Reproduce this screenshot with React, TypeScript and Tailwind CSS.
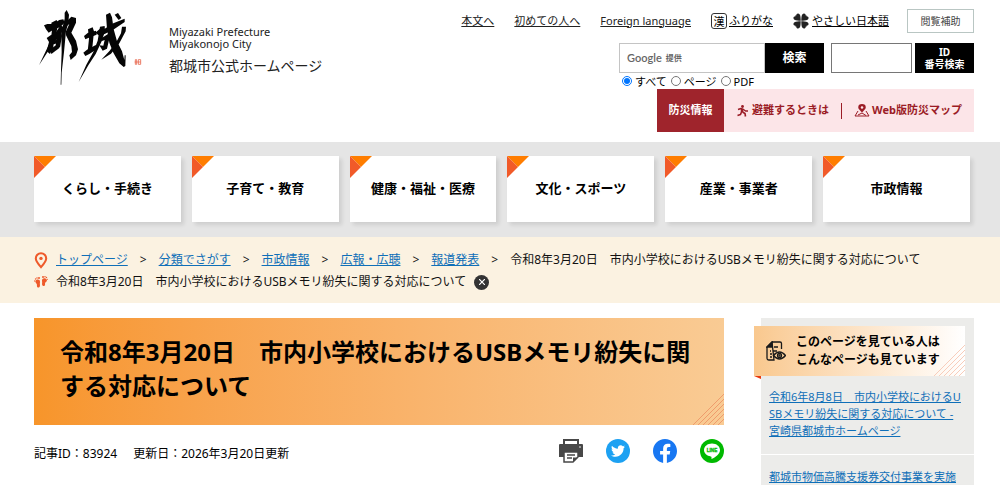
import React from "react";
import { FaTwitter } from "react-icons/fa";

const categories = [
  "くらし・手続き",
  "子育て・教育",
  "健康・福祉・医療",
  "文化・スポーツ",
  "産業・事業者",
  "市政情報",
];

const crumbs = ["トップページ", "分類でさがす", "市政情報", "広報・広聴", "報道発表"];

const pageTitle = "令和8年3月20日　市内小学校におけるUSBメモリ紛失に関する対応について";

function BrushLogo() {
  return (
    <svg viewBox="0 0 330 252" className="h-[84px] w-[110px] shrink-0" role="img" aria-label="都城">
      <g fill="#050505">
        <path d="M30 70 L40 66 L56 66 L76 54 L88 52 L92 62 L78 76 L60 82 L44 92 L36 82Z" />
        <path d="M52 62 L68 54 L72 66 L64 112 L50 118 L54 84Z" />
        <path d="M92 32 L98 24 L105 38 L103 62 L96 88 L90 150 L83 212 L82 248 L80 248 L81 205 L83 150 L82 90 L92 50Z" />
        <path d="M80 70 L92 78 L70 110 L46 142 L15 190 L33 152 L56 104Z" />
        <path d="M38 108 L52 98 L60 104 L58 134 L48 156 L38 148 L45 120Z" />
        <path d="M52 104 L82 90 L84 102 L78 136 L64 138 L68 108 L54 114Z" />
        <path d="M56 117 L76 112 L74 122 L55 128Z" />
        <path d="M48 142 L72 126 L76 138 L52 156Z" />
        <path d="M92 64 L112 44 L126 48 L126 62 L112 92 L126 116 L132 142 L126 160 L110 174 L106 160 L114 150 L112 132 L96 100 L96 88 L106 66 L94 76Z" />
        <path d="M150 102 L162 92 L186 86 L188 98 L168 106 L154 112Z" />
        <path d="M162 82 L176 76 L180 88 L174 146 L161 148 L165 110Z" />
        <path d="M148 152 L158 144 L184 130 L194 130 L188 142 L166 156 L154 162Z" />
        <path d="M184 92 L198 80 L210 82 L238 64 L272 50 L272 60 L240 82 L212 96 L194 100Z" />
        <path d="M198 74 L212 72 L213 88 L202 120 L185 156 L163 190 L134 240 L157 188 L178 150 L191 116Z" />
        <path d="M216 38 L228 32 L234 46 L239 82 L249 118 L264 148 L271 174 L272 160 L275 160 L274 192 L269 195 L256 184 L238 152 L226 122 L219 82Z" />
        <path d="M242 38 L252 33 L262 48 L254 54Z" />
        <path d="M264 74 L276 74 L275 88 L256 124 L231 155 L202 173 L227 146 L247 120 L261 94Z" />
        <path d="M200 110 L222 96 L227 106 L219 140 L206 146 L196 130 L208 131 L212 114 L202 118Z" />
      </g>
      <g fill="none" stroke="#e8694f" strokeWidth="2.5">
        <path d="M304 173h4v14h-4zM313 173h7v14h-7zM302 180h18" />
      </g>
    </svg>
  );
}

function CloverIcon() {
  return (
    <svg viewBox="0 0 32 32" className="size-4 shrink-0" fill="#222" aria-hidden="true">
      {[0, 90, 180, 270].map((turn) => (
        <path
          key={turn}
          transform={`rotate(${turn} 16 16)`}
          d="M15.500 15.500 C11 15 6 15.500 3 13.500 C-0.500 11 0.500 6.500 5 6.500 C4.500 4 5.500 4.500 6.500 5 C6.500 0.500 11 -0.500 13.500 3 C15.500 6 15 11 15.500 15.500Z"
        />
      ))}
    </svg>
  );
}

function EscapeIcon() {
  return (
    <svg viewBox="0 0 24 24" className="size-3 shrink-0" fill="none" stroke="#9b1c26" strokeLinejoin="round" aria-hidden="true">
      <circle cx="11" cy="3" r="2.800" fill="#9b1c26" stroke="none" />
      <path d="M2 9L8 7L13 9L17 12H22" strokeWidth="2.800" />
      <path d="M10 8L10 14" strokeWidth="5" />
      <path d="M11 14L16 17L17 23M9 14L7 19L1 21" strokeWidth="3.200" />
    </svg>
  );
}

function MapIcon() {
  return (
    <svg viewBox="0 0 32 26" className="h-[13px] w-4 shrink-0" fill="none" stroke="#9b1c26" aria-hidden="true">
      <path d="M16 17 C10 11 8.500 9 8.500 6.500 A7.500 6.500 0 0 1 23.500 6.500 C23.500 9 22 11 16 17Z" fill="#9b1c26" stroke="none" />
      <circle cx="16" cy="7" r="2.500" fill="#fce5e8" stroke="none" />
      <path d="M8 14 L2 24 H30 L24 14 M8 22 L16 18 L24 23" strokeWidth="2" />
    </svg>
  );
}

function PinIcon() {
  return (
    <svg viewBox="0 0 14 18" className="h-[17px] w-[14px] shrink-0" aria-hidden="true">
      <path d="M7 16 C3.500 12 1.500 9.500 1.500 6.800 A5.500 5.500 0 0 1 12.500 6.800 C12.500 9.500 10.500 12 7 16Z" fill="none" stroke="#ee5a2b" strokeWidth="2.200" />
      <circle cx="7" cy="6.800" r="1.800" fill="#ee5a2b" />
    </svg>
  );
}

function FootprintsIcon() {
  return (
    <svg viewBox="0 0 28 24" className="h-3 w-[14px] shrink-0" fill="#ee5a2b" aria-hidden="true">
      <path d="M3 10 C6 5 13 7 12 13 C11 16 13 20 11 22 C8 25 5 22 6 18 C6 15 2 14 3 10Z" />
      <circle cx="1.500" cy="10" r="1.300" />
      <circle cx="3" cy="6" r="1.400" />
      <circle cx="6" cy="4" r="1.500" />
      <circle cx="10" cy="4" r="2" />
      <path d="M26 8 C23 2 15 4 16 10 C17 13 15 17 17 19 C20 22 23 19 22 15 C22 12 26 12 26 8Z" />
      <circle cx="26.800" cy="6.500" r="1.200" />
      <circle cx="25" cy="3" r="1.400" />
      <circle cx="22" cy="1.600" r="1.500" />
      <circle cx="18" cy="2" r="2" />
    </svg>
  );
}

function CornerFold() {
  return (
    <svg viewBox="0 0 22 22" className="absolute top-0 left-0 size-[22px]" aria-hidden="true">
      <path d="M0 0H22L11 11Z" fill="#ff7d00" />
      <path d="M0 0V22L11 11Z" fill="#f15a29" />
    </svg>
  );
}

function Stripes({ className }: { className: string }) {
  return (
    <svg viewBox="0 0 31 31" className={className} fill="none" stroke="currentColor" aria-hidden="true">
      <path d="M0 31L31 0M5 31L31 5M10 31L31 10M15 31L31 15M20 31L31 20M25 31L31 25" />
    </svg>
  );
}

function PrintIcon() {
  return (
    <svg viewBox="0 0 24 24" className="size-6" aria-hidden="true">
      <path d="M4 0H20V6H18V2H6V6H4Z" fill="#484848" />
      <path d="M1 5H23Q24 5 24 6V18H19V13H5V18H0V6Q0 5 1 5Z" fill="#484848" />
      <path d="M5 13H19V18L14 23H5Z" fill="#fff" stroke="#484848" strokeWidth="1.500" />
      <path d="M8 16H16M8 19H13" stroke="#484848" strokeWidth="1.300" />
      <path d="M14 23V18.500H19Z" fill="#484848" />
      <circle cx="21" cy="8" r="0.800" fill="#fff" />
    </svg>
  );
}

function FacebookIcon() {
  return (
    <svg viewBox="0 0 24 24" className="size-6" aria-hidden="true">
      <circle cx="12" cy="12" r="11.500" fill="#fff" />
      <path
        fill="#1877f2"
        d="M24 12.073c0-6.627-5.373-12-12-12s-12 5.373-12 12c0 5.990 4.388 10.954 10.125 11.854v-8.385H7.078v-3.470h3.047V9.430c0-3.007 1.792-4.669 4.533-4.669 1.312 0 2.686.235 2.686.235v2.953H15.830c-1.491 0-1.956.925-1.956 1.874v2.250h3.328l-.532 3.470h-2.796v8.385C19.612 23.027 24 18.062 24 12.073z"
      />
    </svg>
  );
}

function LineIcon() {
  return (
    <svg viewBox="0 0 24 24" className="size-6" aria-hidden="true">
      <circle cx="12" cy="12" r="12" fill="#00b900" />
      <path d="M12 4.500C7.500 4.500 4 7.400 4 11c0 3.200 2.900 5.900 6.800 6.400.9.200.8.600.6 2.100 0 .3.200.5.600.3C15 18.300 20 15.200 20 11c0-3.600-3.500-6.500-8-6.500z" fill="#fff" />
      <text x="12" y="12.700" textAnchor="middle" fontSize="4.600" fontWeight="700" fill="#00b900" stroke="#00b900" strokeWidth="0.300" fontFamily="Liberation Sans, sans-serif">
        LINE
      </text>
    </svg>
  );
}

function RelatedIcon() {
  return (
    <svg viewBox="0 0 20 21" className="h-[21px] w-5 shrink-0" fill="none" stroke="#1a1a1a" strokeWidth="1.300" aria-hidden="true">
      <path d="M6 1H14Q15.500 1 15.500 2.500V8M8 19H3Q1 19 1 17V6L6 1Z" />
      <path d="M1 6L6 1V6Z" fill="#1a1a1a" />
      <path d="M8 6H12M4 10H5M7 10H11M4 13H6M4 16H6" />
      <path d="M7.500 14.500Q13.500 7.500 19.500 14.500Q13.500 21.500 7.500 14.500Z" fill="#f9d09c" />
      <circle cx="13.500" cy="14.500" r="2" fill="#f9d09c" />
      <circle cx="13.500" cy="14.500" r="0.500" />
    </svg>
  );
}

function Header() {
  return (
    <header className="flex h-[142px] justify-between pr-[26px] pl-[34px]">
      <a href="#top" className="flex items-start pt-[2px]">
        <BrushLogo />
        <span className="ml-[25px] pt-6">
          <span className="block text-[11px] leading-3">Miyazaki Prefecture</span>
          <span className="block text-[11px] leading-3">Miyakonojo City</span>
          <span className="mt-[6px] block text-sm leading-5">都城市公式ホームページ</span>
        </span>
      </a>

      <div className="flex flex-col items-end pt-[9px]">
        <div className="flex h-6 items-center text-[11px]">
          <a href="#main" className="mr-5 underline">本文へ</a>
          <a href="#first" className="mr-5 underline">初めての人へ</a>
          <a href="#lang" className="mr-5 underline">Foreign language</a>
          <a href="#ruby" className="mr-5 flex items-center gap-[2px] text-black">
            <span className="flex size-4 items-center justify-center rounded-[3px] border border-[#333] text-[11px] leading-none">漢</span>
            <span className="underline">ふりがな</span>
          </a>
          <a href="#easy" className="mr-[18px] flex items-center gap-[3px] text-black">
            <CloverIcon />
            <span className="underline">やさしい日本語</span>
          </a>
          <button type="button" className="h-6 w-[67px] border border-[#b9c6c3] bg-white text-[10px] text-[#444]">
            閲覧補助
          </button>
        </div>

        <div className="mt-[10px] flex items-start">
          <form onSubmit={(event) => event.preventDefault()}>
            <div className="flex">
              <div className="relative">
                <input id="q" type="search" aria-label="サイト内検索" className="block h-[30px] w-[146px] border border-[#c4c4c4] bg-white px-2 text-xs" />
                <span className="pointer-events-none absolute inset-y-0 left-2 flex items-center gap-1 text-[#666]">
                  <span className="font-[Lato] text-[11px] font-semibold">Google</span>
                  <span className="text-[8px] font-bold">提供</span>
                </span>
              </div>
              <button type="submit" className="h-[30px] w-[59px] bg-black text-xs font-bold text-white">検索</button>
            </div>
            <div className="flex h-4 items-center pl-[3px] text-[11px] leading-none text-black">
              {["すべて", "ページ", "PDF"].map((label, index) => (
                <label key={label} className="mr-1 flex items-center gap-[3px]">
                  <input type="radio" name="scope" defaultChecked={index === 0} className="size-[10px]" />
                  {label}
                </label>
              ))}
            </div>
          </form>
          <form className="ml-[7px] flex gap-[3px]" onSubmit={(event) => event.preventDefault()}>
            <input type="text" aria-label="ID番号" className="h-[30px] w-[81px] border border-[#767676] bg-white px-1 text-xs" />
            <button type="submit" className="h-[30px] w-[59px] bg-black text-[10px] leading-3 font-bold text-white">
              <span className="block">ID</span>
              <span className="block">番号検索</span>
            </button>
          </form>
        </div>

        <div className="flex h-[43px] items-stretch bg-[#fce5e8] text-[11px] font-bold text-[#9b1c26]">
          <a href="#bousai" className="flex w-[67px] items-center justify-center bg-[#9f242c] text-white">防災情報</a>
          <a href="#hinan" className="flex items-center gap-[3px] pl-[13px]">
            <EscapeIcon />
            避難するときは
          </a>
          <span className="mx-3 h-4 w-px self-center bg-[#9b1c26]" />
          <a href="#map" className="flex items-center gap-[2px] pr-3">
            <MapIcon />
            Web版防災マップ
          </a>
        </div>
      </div>
    </header>
  );
}

export default function App() {
  return (
    <div className="h-screen overflow-hidden bg-white font-['Noto_Sans','Noto_Sans_CJK_JP',sans-serif] text-[#222]">
      <Header />

      <nav className="grid grid-cols-6 gap-[11px] bg-[#e5e5e5] pt-[14px] pr-[30px] pb-[15px] pl-[34px]">
        {categories.map((name) => (
          <a
            key={name}
            href="#category"
            className="relative flex h-[66px] items-center justify-center bg-white text-[13px] font-bold text-black shadow-[3px_3px_4px_rgba(0,0,0,0.1)]"
          >
            <CornerFold />
            {name}
          </a>
        ))}
      </nav>

      <div className="bg-[#fbf2e1] pt-3 pr-[26px] pb-[10px] pl-[34px] text-xs text-[#111]">
        <nav className="flex h-[22px] items-center" aria-label="パンくず">
          <PinIcon />
          <ol className="ml-2 flex">
            {crumbs.map((crumb) => (
              <li key={crumb}>
                <a href="#crumb" className="text-[#0f6fb8] underline">{crumb}</a>
                <span className="mx-3">&gt;</span>
              </li>
            ))}
            <li>{pageTitle}</li>
          </ol>
        </nav>
        <div className="flex h-[22px] items-center">
          <FootprintsIcon />
          <span className="ml-2">{pageTitle}</span>
          <button type="button" aria-label="削除" className="ml-2 flex size-[15px] items-center justify-center rounded-full bg-[#333]">
            <svg viewBox="0 0 6 6" className="size-[6px]" stroke="#fff" strokeWidth="1.200" aria-hidden="true">
              <path d="M0 0L6 6M6 0L0 6" />
            </svg>
          </button>
        </div>
      </div>

      <div className="flex items-start pt-[15px] pr-[26px] pl-[34px]">
        <main id="main" className="min-w-0 flex-1">
          <div className="relative bg-linear-to-r from-[#f7952a] to-[#f9cb94] px-[26px] pt-[17px] pb-[22px]">
            <h1 className="text-2xl leading-[34px] font-bold text-black">{pageTitle}</h1>
            <Stripes className="absolute right-0 bottom-0 size-[31px] text-[#ef9c6c]" />
          </div>
          <div className="mt-[14px] flex items-center justify-between">
            <p className="flex gap-4 pt-[6px] text-xs text-black">
              <span>記事ID：83924</span>
              <span>更新日：2026年3月20日更新</span>
            </p>
            <div className="flex gap-[23px]">
              <button type="button" aria-label="印刷"><PrintIcon /></button>
              <a href="#twitter" aria-label="Twitter" className="flex size-6 items-center justify-center rounded-full bg-[#1da1f2]">
                <FaTwitter className="size-[14px] text-white" />
              </a>
              <a href="#facebook" aria-label="Facebook"><FacebookIcon /></a>
              <a href="#line" aria-label="LINE"><LineIcon /></a>
            </div>
          </div>
        </main>

        <aside className="ml-[37px] w-[213px] shrink-0 bg-[#ececea] pt-2">
          <div className="relative mr-[9px] -ml-[7px] flex h-[50px] items-center bg-linear-to-r from-[#f9c88e] to-white pl-3">
            <RelatedIcon />
            <h2 className="ml-[10px] text-xs leading-[18px] font-bold text-black">
              このページを見ている人は
              <br />
              こんなページも見ています
            </h2>
            <Stripes className="absolute right-0 bottom-0 size-[31px] text-[#f8cdbb]" />
            <svg viewBox="0 0 7 3" className="absolute top-full left-0 h-[3px] w-[7px]" aria-hidden="true">
              <path d="M0 0H7V3Z" fill="#e8380d" />
            </svg>
          </div>
          <ul className="text-[11px] leading-[17px] break-all text-[#0f6fb8] underline">
            <li className="border-b border-white pt-3 pr-[9px] pb-[15px] pl-2">
              <a href="#related-1">令和6年8月8日　市内小学校におけるUSBメモリ紛失に関する対応について - 宮崎県都城市ホームページ</a>
            </li>
            <li className="pt-[13px] pr-[9px] pb-4 pl-2">
              <a href="#related-2">都城市物価高騰支援券交付事業を実施</a>
            </li>
          </ul>
        </aside>
      </div>
    </div>
  );
}
